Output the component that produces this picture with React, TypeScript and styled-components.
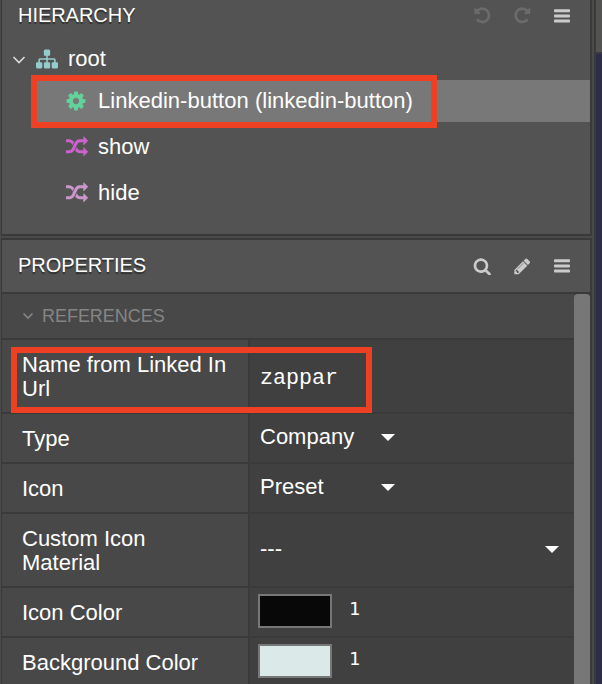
import React from "react";
import styled, { createGlobalStyle } from "styled-components";

const Global = createGlobalStyle`
  * { box-sizing: border-box; }
  body {
    margin: 0;
    overflow: hidden;
    background: #4a4a4a;
    color: #fff;
    font-family: "Liberation Sans", Arial, sans-serif;
    font-size: 22px;
  }
`;

const Workspace = styled.main`
  position: relative;
  display: grid;
  grid-template-columns: 592px 1fr;
  column-gap: 2px;
  width: 602px;
  height: 684px;
  padding-left: 1px;
  overflow: hidden;
`;

const Sidebar = styled.div`
  display: flex;
  flex-direction: column;
  gap: 2px;
  min-width: 0;
  width: 591px;
`;

const Panel = styled.section<{ $height: number; $first?: boolean }>`
  flex: none;
  height: ${(p) => p.$height}px;
  border: 2px solid #3a3a3a;
  border-left-width: 1px;
  border-top-width: ${(p) => (p.$first ? 0 : 2)}px;
  background: #535353;
  overflow: hidden;
`;

const PanelHeader = styled.header<{ $height: number }>`
  display: flex;
  align-items: center;
  justify-content: space-between;
  height: ${(p) => p.$height}px;
  padding: 0 18px 0 16px;
`;

const PanelTitle = styled.h2`
  margin: -2px 0 0;
  font-size: 20px;
  font-weight: 400;
  line-height: 24px;
  letter-spacing: -0.04px;
  text-shadow: 0 2px 1px #303030;
`;

const Tools = styled.div`
  display: flex;
  align-items: center;
  gap: 20px;
`;

const Tool = styled.button<{ $muted?: boolean }>`
  display: grid;
  place-items: center;
  width: 20px;
  height: 24px;
  padding: 0;
  border: 0;
  background: none;
  color: ${(p) => (p.$muted ? "#6b6b6b" : "#cbcbcb")};
`;

const Glyph = styled.svg<{ $size: number; $flip?: boolean }>`
  display: block;
  flex: none;
  width: ${(p) => p.$size}px;
  height: ${(p) => p.$size}px;
  fill: currentColor;
  transform: ${(p) => (p.$flip ? "scaleX(-1)" : "none")};
`;

const TreeRow = styled.div<{ $height: number; $depth?: number; $selected?: boolean }>`
  display: flex;
  align-items: center;
  height: ${(p) => p.$height}px;
  margin-left: ${(p) => (p.$depth ? 32 : 0)}px;
  padding-left: ${(p) => (p.$depth ? 31 : 10)}px;
  background: ${(p) => (p.$selected ? "#787878" : "transparent")};
`;

const TreeIcon = styled.span<{ $color: string; $width: number }>`
  display: flex;
  align-items: center;
  justify-content: center;
  width: ${(p) => p.$width}px;
  color: ${(p) => p.$color};
`;

const TreeLabel = styled.span<{ $inset: number }>`
  margin-left: ${(p) => p.$inset}px;
  line-height: 24px;
  letter-spacing: 0.02px;
  white-space: nowrap;
`;

const Tree = styled.div`
  padding-top: 7px;
`;

const Chevron = styled.svg<{ $color: string }>`
  display: block;
  flex: none;
  fill: none;
  stroke: ${(p) => p.$color};
  stroke-width: 1.6;
`;

const PropertyBody = styled.div`
  display: grid;
  grid-template-columns: 572px 16px;
  height: 392px;
  border-top: 2px solid #3a3a3a;
  background: #404040;
`;

const ScrollThumb = styled.div`
  border-radius: 4px 4px 0 0;
  background: #777;
`;

const GroupHeader = styled.div`
  display: flex;
  align-items: center;
  gap: 8px;
  height: 46px;
  padding-left: 20px;
  border-bottom: 2px solid #3a3a3a;
  background: #484848;
  color: #858585;
  font-size: 18px;
  letter-spacing: -0.04px;
`;

const PropertyRow = styled.div<{ $tall?: boolean }>`
  display: grid;
  grid-template-columns: 248px 1fr;
  height: ${(p) => (p.$tall ? 74 : 50)}px;
  border-bottom: 2px solid #3a3a3a;
`;

const PropertyName = styled.div`
  display: flex;
  align-items: center;
  padding: 2px 20px 0 20px;
  border-right: 2px solid #3a3a3a;
  background: #484848;
  line-height: 24px;
`;

const PropertyValue = styled.div<{ $drop?: number }>`
  display: flex;
  align-items: center;
  padding: ${(p) => p.$drop ?? 0}px 15px ${(p) => (p.$drop ? 0 : 2)}px 10px;
`;

const Choice = styled.div<{ $full?: boolean }>`
  display: flex;
  align-items: center;
  justify-content: space-between;
  width: ${(p) => (p.$full ? "100%" : "135px")};
  line-height: 24px;
`;

const Caret = styled.span`
  width: 0;
  height: 0;
  border: solid transparent;
  border-width: 7px 7px 0;
  border-top-color: #fff;
`;

const TextValue = styled.span`
  font-family: "Liberation Mono", "Courier New", monospace;
  font-size: 21.7px;
  line-height: 24px;
`;

const ColorField = styled.div`
  display: flex;
  align-items: center;
  gap: 17px;
  margin-left: -2px;
`;

const Swatch = styled.span<{ $color: string }>`
  width: 74px;
  height: 34px;
  border: 2px solid #777;
  background: ${(p) => p.$color};
`;

const Alpha = styled.span`
  font-family: "DejaVu Sans Mono", monospace;
  font-size: 18.5px;
  line-height: 30px;
  margin-top: -4px;
`;

const Stage = styled.aside`
  display: flex;
  flex-direction: column;
  height: 684px;
  margin-left: -1px;
  border-left: 2px solid #3a3a3a;
  background: #2e2d47;
`;

const StageBar = styled.div`
  height: 54px;
  border-bottom: 2px solid #3a3a3a;
  background: #535351;
`;

const Highlight = styled.div<{ $x: number; $y: number; $w: number; $h: number }>`
  position: absolute;
  left: ${(p) => p.$x}px;
  top: ${(p) => p.$y}px;
  width: ${(p) => p.$w}px;
  height: ${(p) => p.$h}px;
  border: 6px solid #ee4023;
  pointer-events: none;
`;

const paths = {
  sitemap:
    "M1792 1248v320q0 40-28 68t-68 28h-320q-40 0-68-28t-28-68v-320q0-40 28-68t68-28h96v-192h-512v192h96q40 0 68 28t28 68v320q0 40-28 68t-68 28h-320q-40 0-68-28t-28-68v-320q0-40 28-68t68-28h96v-192h-512v192h96q40 0 68 28t28 68v320q0 40-28 68t-68 28h-320q-40 0-68-28t-28-68v-320q0-40 28-68t68-28h96v-192q0-52 38-90t90-38h512v-192h-96q-40 0-68-28t-28-68v-320q0-40 28-68t68-28h320q40 0 68 28t28 68v320q0 40-28 68t-68 28h-96v192h512q52 0 90 38t38 90v192h96q40 0 68 28t28 68z",
  cog:
    "M1152 896q0-106-75-181t-181-75-181 75-75 181 75 181 181 75 181-75 75-181zm512-109v222q0 12-8 23t-20 13l-185 28q-19 54-39 91 35 50 107 138 10 12 10 25t-9 23q-27 37-99 108t-94 71q-12 0-26-9l-138-108q-44 23-91 38-16 136-29 186-7 28-36 28h-222q-14 0-24.5-8.5t-11.5-21.5l-28-184q-49-16-90-37l-141 107q-10 9-25 9-14 0-25-11-126-114-165-168-7-10-7-23 0-12 8-23 15-21 51-66.5t54-70.5q-27-50-41-99l-183-27q-13-2-21-12.5t-8-23.5v-222q0-12 8-23t19-13l186-28q14-46 39-92-40-57-107-138-10-12-10-24 0-10 9-23 26-36 98.5-107.5t94.5-71.5q13 0 26 10l138 107q44-23 91-38 16-136 29-186 7-28 36-28h222q14 0 24.5 8.5t11.5 21.5l28 184q49 16 90 37l142-107q9-9 24-9 13 0 25 10 129 119 165 170 7 8 7 22 0 12-8 23-15 21-51 66.5t-54 70.5q26 50 41 98l183 28q13 2 21 12.5t8 23.5z",
  random:
    "M666 481q-60 92-137 273-22-45-37-72.5t-40.5-63.5-51-56.5-63-35-81.5-14.5h-224q-14 0-23-9t-9-23v-192q0-14 9-23t23-9h224q250 0 410 225zm1126 799q0 14-9 23l-320 320q-9 9-23 9-13 0-22.5-9.5t-9.5-22.5v-192q-32 0-85 .5t-81 1-73-1-71-5-64-10.5-63-18.5-58-28.5-59-40-55-53.5-56-69.5q59-93 136-273 22 45 37 72.5t40.5 63.5 51 56.5 63 35 81.5 14.5h256v-192q0-14 9-23t23-9q12 0 24 10l319 319q9 9 9 23zm0-896q0 14-9 23l-320 320q-9 9-23 9-13 0-22.5-9.5t-9.5-22.5v-192h-256q-48 0-87 15t-69 45-51 61.5-45 77.5q-32 62-78 171-29 66-49.5 111t-54 105-64 100-74 83-90 68.5-106.5 42-128 16.5h-224q-14 0-23-9t-9-23v-192q0-14 9-23t23-9h224q48 0 87-15t69-45 51-61.5 45-77.5q32-62 78-171 29-66 49.5-111t54-105 64-100 74-83 90-68.5 106.5-42 128-16.5h256v-192q0-14 9-23t23-9q12 0 24 10l319 319q9 9 9 23z",
  undo:
    "M1664 896q0 156-61 298t-164 245-245 164-298 61q-172 0-327-72.5t-264-204.5q-7-10-6.5-22.5t8.5-20.5l137-138q10-9 25-9 16 2 23 12 73 95 179 147t225 52q104 0 198.5-40.5t163.5-109.5 109.5-163.5 40.5-198.5-40.5-198.5-109.5-163.5-163.5-109.5-198.5-40.5q-98 0-188 35.5t-160 101.5l137 138q31 30 14 69-17 40-59 40h-448q-26 0-45-19t-19-45v-448q0-42 40-59 39-17 69 14l130 129q107-101 244.5-156.5t284.5-55.5q156 0 298 61t245 164 164 245 61 298z",
  search:
    "M1216 832q0-185-131.5-316.5t-316.5-131.5-316.5 131.5-131.5 316.5 131.5 316.5 316.5 131.5 316.5-131.5 131.5-316.5zm512 832q0 52-38 90t-90 38q-54 0-90-38l-343-342q-179 124-399 124-143 0-273.5-55.5t-225-150-150-225-55.5-273.5 55.5-273.5 150-225 225-150 273.5-55.5 273.5 55.5 225 150 150 225 55.5 273.5q0 220-124 399l343 343q37 37 37 90z",
  pencil:
    "M491 1536l91-91-235-235-91 91v107h128v128h107zm523-928q0-22-22-22-10 0-17 7l-542 542q-7 7-7 17 0 22 22 22 10 0 17-7l542-542q7-7 7-17zm-54-192l416 416-832 832h-416v-416zm683 96q0 53-37 90l-166 166-416-416 166-165q36-38 90-38 53 0 91 38l235 234q37 39 37 91z",
};

function Icon({ name, size, flip }: { name: keyof typeof paths; size: number; flip?: boolean }) {
  return (
    <Glyph $size={size} $flip={flip} viewBox="0 0 1792 1792" aria-hidden>
      <path d={paths[name]} />
    </Glyph>
  );
}

function Bars() {
  return (
    <Glyph $size={16} viewBox="0 0 16 16" aria-hidden>
      <rect y="1.3" width="16" height="3" rx="0.8" />
      <rect y="6.4" width="16" height="3" rx="0.8" />
      <rect y="11.5" width="16" height="3" rx="0.8" />
    </Glyph>
  );
}

function Hierarchy() {
  return (
    <Panel $height={236} $first>
      <PanelHeader $height={31}>
        <PanelTitle>HIERARCHY</PanelTitle>
        <Tools>
          <Tool $muted aria-label="Undo"><Icon name="undo" size={18.6} /></Tool>
          <Tool $muted aria-label="Redo"><Icon name="undo" size={18.6} flip /></Tool>
          <Tool aria-label="Menu"><Bars /></Tool>
        </Tools>
      </PanelHeader>
      <Tree>
        <TreeRow $height={42}>
          <Chevron width="14" height="10" viewBox="0 0 14 10" $color="#ddd">
            <path d="M1.5 3 7 8.5 12.5 3" />
          </Chevron>
          <TreeIcon $color="#96cbcb" $width={42}><Icon name="sitemap" size={22} /></TreeIcon>
          <TreeLabel $inset={0}>root</TreeLabel>
        </TreeRow>
        <TreeRow $height={42} $depth={1} $selected>
          <TreeIcon $color="#62d29b" $width={22}><Icon name="cog" size={22} /></TreeIcon>
          <TreeLabel $inset={11}>Linkedin-button (linkedin-button)</TreeLabel>
        </TreeRow>
        <TreeRow $height={50} $depth={1}>
          <TreeIcon $color="#cc62cc" $width={24}><Icon name="random" size={22} /></TreeIcon>
          <TreeLabel $inset={9}>show</TreeLabel>
        </TreeRow>
        <TreeRow $height={42} $depth={1}>
          <TreeIcon $color="#cb96cb" $width={24}><Icon name="random" size={22} /></TreeIcon>
          <TreeLabel $inset={9}>hide</TreeLabel>
        </TreeRow>
      </Tree>
    </Panel>
  );
}

function ColorProperty({ name, color }: { name: string; color: string }) {
  return (
    <PropertyRow>
      <PropertyName>{name}</PropertyName>
      <PropertyValue>
        <ColorField><Swatch $color={color} /><Alpha>1</Alpha></ColorField>
      </PropertyValue>
    </PropertyRow>
  );
}

function Properties() {
  return (
    <Panel $height={448}>
      <PanelHeader $height={52}>
        <PanelTitle>PROPERTIES</PanelTitle>
        <Tools>
          <Tool aria-label="Search"><Icon name="search" size={18.6} /></Tool>
          <Tool aria-label="Edit"><Icon name="pencil" size={18.6} /></Tool>
          <Tool aria-label="Menu"><Bars /></Tool>
        </Tools>
      </PanelHeader>
      <PropertyBody>
        <div>
          <GroupHeader>
            <Chevron width="12" height="8" viewBox="0 0 12 8" $color="#858585">
              <path d="M1.5 1.5 6 6l4.5-4.5" />
            </Chevron>
            REFERENCES
          </GroupHeader>
          <PropertyRow $tall>
            <PropertyName>Name from Linked In Url</PropertyName>
            <PropertyValue $drop={5}><TextValue>zappar</TextValue></PropertyValue>
          </PropertyRow>
          <PropertyRow>
            <PropertyName>Type</PropertyName>
            <PropertyValue><Choice>Company<Caret /></Choice></PropertyValue>
          </PropertyRow>
          <PropertyRow>
            <PropertyName>Icon</PropertyName>
            <PropertyValue><Choice>Preset<Caret /></Choice></PropertyValue>
          </PropertyRow>
          <PropertyRow $tall>
            <PropertyName>Custom Icon<br />Material</PropertyName>
            <PropertyValue><Choice $full>---<Caret /></Choice></PropertyValue>
          </PropertyRow>
          <ColorProperty name="Icon Color" color="#080808" />
          <ColorProperty name="Background Color" color="#dce9e9" />
        </div>
        <ScrollThumb />
      </PropertyBody>
    </Panel>
  );
}

export default function App() {
  return (
    <>
      <Global />
      <Workspace>
        <Sidebar>
          <Hierarchy />
          <Properties />
        </Sidebar>
        <Stage><StageBar /></Stage>
        <Highlight $x={31} $y={75} $w={406} $h={53} />
        <Highlight $x={11} $y={347} $w={361} $h={66} />
      </Workspace>
    </>
  );
}
